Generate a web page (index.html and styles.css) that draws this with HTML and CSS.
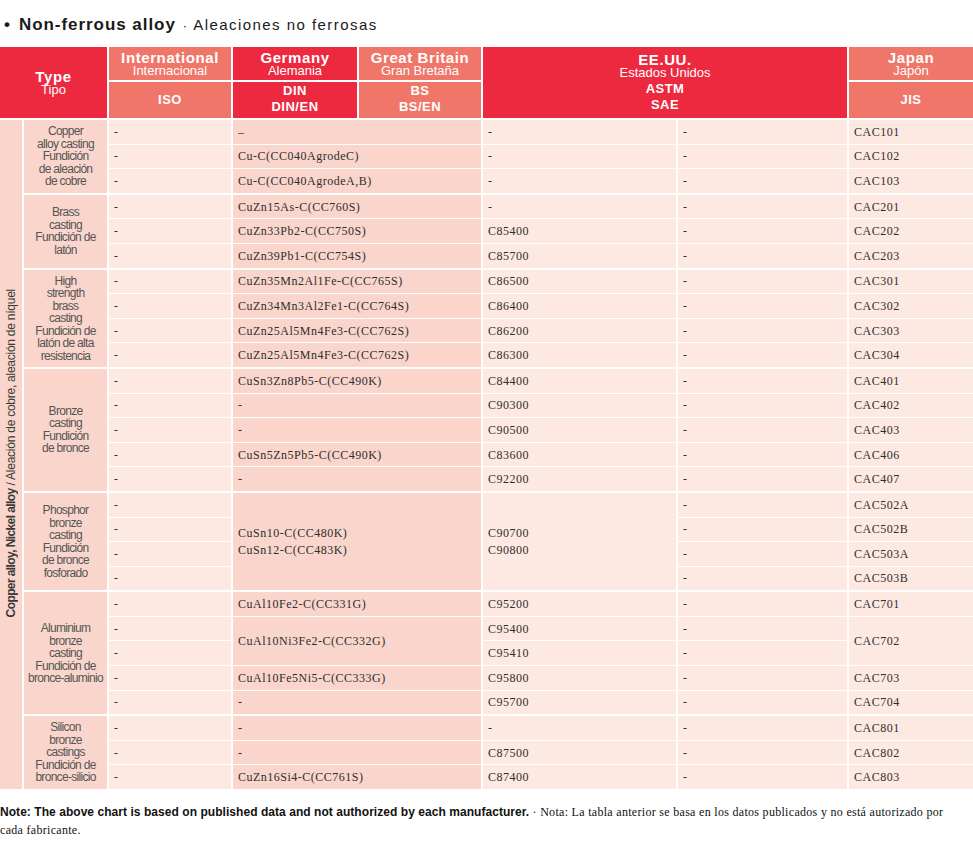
FILE: index.html
```html
<!DOCTYPE html>
<html lang="en">
<head>
<meta charset="utf-8">
<title>Non-ferrous alloy</title>
<link rel="stylesheet" href="styles.css">
</head>
<body>
<h1 class="title"><span class="bullet">•</span><span class="main">Non-ferrous alloy</span><span class="sep">·</span><span class="sub">Aleaciones no ferrosas</span></h1>
<div class="wrap">
<table class="chart">
<colgroup>
<col class="c-label"><col class="c-type"><col class="c-iso"><col class="c-din"><col class="c-bs"><col class="c-astm"><col class="c-sae"><col class="c-jis">
</colgroup>
<thead>
<tr class="h1">
<th colspan="2" rowspan="2" class="red typeh"><span class="en">Type</span><span class="es">Tipo</span></th>
<th class="salmon"><span class="en">International</span><span class="es">Internacional</span></th>
<th class="red"><span class="en">Germany</span><span class="es">Alemania</span></th>
<th class="salmon"><span class="en">Great Britain</span><span class="es">Gran Bretaña</span></th>
<th colspan="2" rowspan="2" class="red usa"><span class="en">EE.UU.</span><span class="es">Estados Unidos</span><span class="code first">ASTM</span><span class="code">SAE</span></th>
<th class="salmon"><span class="en">Japan</span><span class="es">Japón</span></th>
</tr>
<tr class="h2">
<th class="salmon std">ISO</th>
<th class="red std two">DIN<br>DIN/EN</th>
<th class="salmon std two">BS<br>BS/EN</th>
<th class="salmon std">JIS</th>
</tr>
</thead>
<tbody>
<!-- Copper alloy casting -->
<tr class="g">
<td rowspan="27" class="label dk"><span class="vlabel"><b>Copper alloy, Nickel alloy</b> / Aleación de cobre, aleación de níquel</span></td>
<td rowspan="3" class="type dk">Copper<br>alloy casting<br>Fundición<br>de aleación<br>de cobre</td>
<td>-</td><td colspan="2" class="dk">–</td><td>-</td><td>-</td><td>CAC101</td>
</tr>
<tr><td>-</td><td colspan="2" class="dk">Cu-C(CC040AgrodeC)</td><td>-</td><td>-</td><td>CAC102</td></tr>
<tr><td>-</td><td colspan="2" class="dk">Cu-C(CC040AgrodeA,B)</td><td>-</td><td>-</td><td>CAC103</td></tr>
<!-- Brass casting -->
<tr class="g">
<td rowspan="3" class="type dk">Brass<br>casting<br>Fundición de<br>latón</td>
<td>-</td><td colspan="2" class="dk">CuZn15As-C(CC760S)</td><td>-</td><td>-</td><td>CAC201</td>
</tr>
<tr><td>-</td><td colspan="2" class="dk">CuZn33Pb2-C(CC750S)</td><td>C85400</td><td>-</td><td>CAC202</td></tr>
<tr><td>-</td><td colspan="2" class="dk">CuZn39Pb1-C(CC754S)</td><td>C85700</td><td>-</td><td>CAC203</td></tr>
<!-- High strength brass casting -->
<tr class="g">
<td rowspan="4" class="type dk">High<br>strength<br>brass<br>casting<br>Fundición de<br>latón de alta<br>resistencia</td>
<td>-</td><td colspan="2" class="dk">CuZn35Mn2Al1Fe-C(CC765S)</td><td>C86500</td><td>-</td><td>CAC301</td>
</tr>
<tr><td>-</td><td colspan="2" class="dk">CuZn34Mn3Al2Fe1-C(CC764S)</td><td>C86400</td><td>-</td><td>CAC302</td></tr>
<tr><td>-</td><td colspan="2" class="dk">CuZn25Al5Mn4Fe3-C(CC762S)</td><td>C86200</td><td>-</td><td>CAC303</td></tr>
<tr><td>-</td><td colspan="2" class="dk">CuZn25Al5Mn4Fe3-C(CC762S)</td><td>C86300</td><td>-</td><td>CAC304</td></tr>
<!-- Bronze casting -->
<tr class="g">
<td rowspan="5" class="type dk">Bronze<br>casting<br>Fundición<br>de bronce</td>
<td>-</td><td colspan="2" class="dk">CuSn3Zn8Pb5-C(CC490K)</td><td>C84400</td><td>-</td><td>CAC401</td>
</tr>
<tr><td>-</td><td colspan="2" class="dk">-</td><td>C90300</td><td>-</td><td>CAC402</td></tr>
<tr><td>-</td><td colspan="2" class="dk">-</td><td>C90500</td><td>-</td><td>CAC403</td></tr>
<tr><td>-</td><td colspan="2" class="dk">CuSn5Zn5Pb5-C(CC490K)</td><td>C83600</td><td>-</td><td>CAC406</td></tr>
<tr><td>-</td><td colspan="2" class="dk">-</td><td>C92200</td><td>-</td><td>CAC407</td></tr>
<!-- Phosphor bronze casting -->
<tr class="g">
<td rowspan="4" class="type dk">Phosphor<br>bronze<br>casting<br>Fundición<br>de bronce<br>fosforado</td>
<td>-</td>
<td colspan="2" rowspan="4" class="dk multi">CuSn10-C(CC480K)<br>CuSn12-C(CC483K)</td>
<td rowspan="4" class="multi">C90700<br>C90800</td>
<td>-</td><td>CAC502A</td>
</tr>
<tr><td>-</td><td>-</td><td>CAC502B</td></tr>
<tr><td>-</td><td>-</td><td>CAC503A</td></tr>
<tr><td>-</td><td>-</td><td>CAC503B</td></tr>
<!-- Aluminium bronze casting -->
<tr class="g">
<td rowspan="5" class="type dk">Aluminium<br>bronze<br>casting<br>Fundición de<br>bronce-aluminio</td>
<td>-</td><td colspan="2" class="dk">CuAl10Fe2-C(CC331G)</td><td>C95200</td><td>-</td><td>CAC701</td>
</tr>
<tr><td>-</td><td colspan="2" rowspan="2" class="dk">CuAl10Ni3Fe2-C(CC332G)</td><td>C95400</td><td>-</td><td rowspan="2">CAC702</td></tr>
<tr><td>-</td><td>C95410</td><td>-</td></tr>
<tr><td>-</td><td colspan="2" class="dk">CuAl10Fe5Ni5-C(CC333G)</td><td>C95800</td><td>-</td><td>CAC703</td></tr>
<tr><td>-</td><td colspan="2" class="dk">-</td><td>C95700</td><td>-</td><td>CAC704</td></tr>
<!-- Silicon bronze castings -->
<tr class="g">
<td rowspan="3" class="type dk">Silicon<br>bronze<br>castings<br>Fundición de<br>bronce-silicio</td>
<td>-</td><td colspan="2" class="dk">-</td><td>-</td><td>-</td><td>CAC801</td>
</tr>
<tr><td>-</td><td colspan="2" class="dk">-</td><td>C87500</td><td>-</td><td>CAC802</td></tr>
<tr><td>-</td><td colspan="2" class="dk">CuZn16Si4-C(CC761S)</td><td>C87400</td><td>-</td><td>CAC803</td></tr>
</tbody>
</table>
</div>
<p class="note"><b>Note: The above chart is based on published data and not authorized by each manufacturer.</b> <span class="es">· Nota: La tabla anterior se basa en los datos publicados y no está autorizado por cada fabricante.</span></p>
</body>
</html>
```
FILE: styles.css
```css
* { box-sizing: border-box; }

html, body {
  margin: 0;
  padding: 0;
  background: #ffffff;
}

body {
  width: 973px;
  font-family: "Liberation Sans", Arial, sans-serif;
  color: #1e1e1e;
}

/* ---------- Title ---------- */
.title {
  margin: 0;
  padding: 15px 0 0 4px;
  height: 35px;
  font-size: 17px;
  line-height: 20px;
  font-weight: normal;
  color: #1a1a1a;
  white-space: nowrap;
}
.title .bullet { font-weight: bold; margin-right: 9px; }
.title .main { font-weight: bold; letter-spacing: 0.95px; }
.title .sep { font-size: 13px; margin: 0 6px 0 7px; }
.title .sub { font-size: 15px; letter-spacing: 1.45px; }

/* ---------- Table ---------- */
.wrap {
  overflow: hidden;
  margin-top: 12px;
}

.chart {
  border-collapse: separate;
  border-spacing: 2px 1px;
  table-layout: fixed;
  width: 977px;
  margin: -1px -2px 0 -2px;
}

.c-label { width: 22px; }
.c-type { width: 83px; }
.c-iso { width: 122px; }
.c-din { width: 124px; }
.c-bs { width: 122px; }
.c-astm { width: 193px; }
.c-sae { width: 169px; }
.c-jis { width: 124px; }

.chart th {
  padding: 0;
  color: #ffffff;
  font-weight: normal;
  text-align: center;
  vertical-align: middle;
  white-space: nowrap;
}

.red { background: #ed2940; }
.salmon { background: #f0766a; }

.h1 th { height: 33px; }
.h2 th { height: 37px; border-top: 1px solid #ffffff; }

.chart th .en {
  display: block;
  font-weight: bold;
  font-size: 15px;
  line-height: 14px;
  letter-spacing: 0.6px;
}
.chart th .es {
  display: block;
  font-size: 13px;
  line-height: 12px;
}
.chart th .code {
  display: block;
  font-weight: bold;
  font-size: 13px;
  line-height: 16px;
  letter-spacing: 0.4px;
}
.chart th .code.first { margin-top: 2px; }

.chart .std {
  font-weight: bold;
  font-size: 13px;
  line-height: 16px;
  letter-spacing: 0.5px;
}
.chart .std.two { padding-bottom: 3px; }

/* ---------- Body ---------- */
.chart tbody tr { height: 23.6px; }
.chart tbody tr.g { height: 24.6px; }
.chart tbody tr.g > td { border-top: 1px solid #ffffff; }

.chart td {
  padding: 0 5px;
  font-family: "Liberation Serif", "Times New Roman", serif;
  font-size: 12px;
  line-height: 14px;
  letter-spacing: 0.5px;
  color: #2e2e2e;
  background: #fde9e1;
  vertical-align: middle;
  white-space: nowrap;
}
.chart td.dk { background: #f9d5cb; }
.chart td.multi { line-height: 16.5px; }

.chart td.type {
  padding: 0;
  text-align: center;
  font-family: "Liberation Sans", Arial, sans-serif;
  font-size: 12px;
  line-height: 12.5px;
  letter-spacing: -0.7px;
  color: #555555;
}

.chart td.label {
  padding: 0;
  text-align: center;
}
.vlabel {
  display: inline-block;
  writing-mode: vertical-rl;
  transform: rotate(180deg);
  white-space: nowrap;
  font-family: "Liberation Sans", Arial, sans-serif;
  font-size: 12px;
  line-height: 14px;
  letter-spacing: -0.25px;
  color: #3a3a3a;
}
.vlabel b {
  font-size: 12px;
  letter-spacing: -0.6px;
}

/* ---------- Note ---------- */
.note {
  margin: 13px 0 0 0;
  width: 952px;
  font-size: 12px;
  line-height: 18px;
  color: #111111;
}
.note b {
  font-family: "Liberation Sans", Arial, sans-serif;
  letter-spacing: 0.05px;
}
.note .es {
  font-family: "Liberation Serif", "Times New Roman", serif;
  letter-spacing: 0.3px;
}
```
